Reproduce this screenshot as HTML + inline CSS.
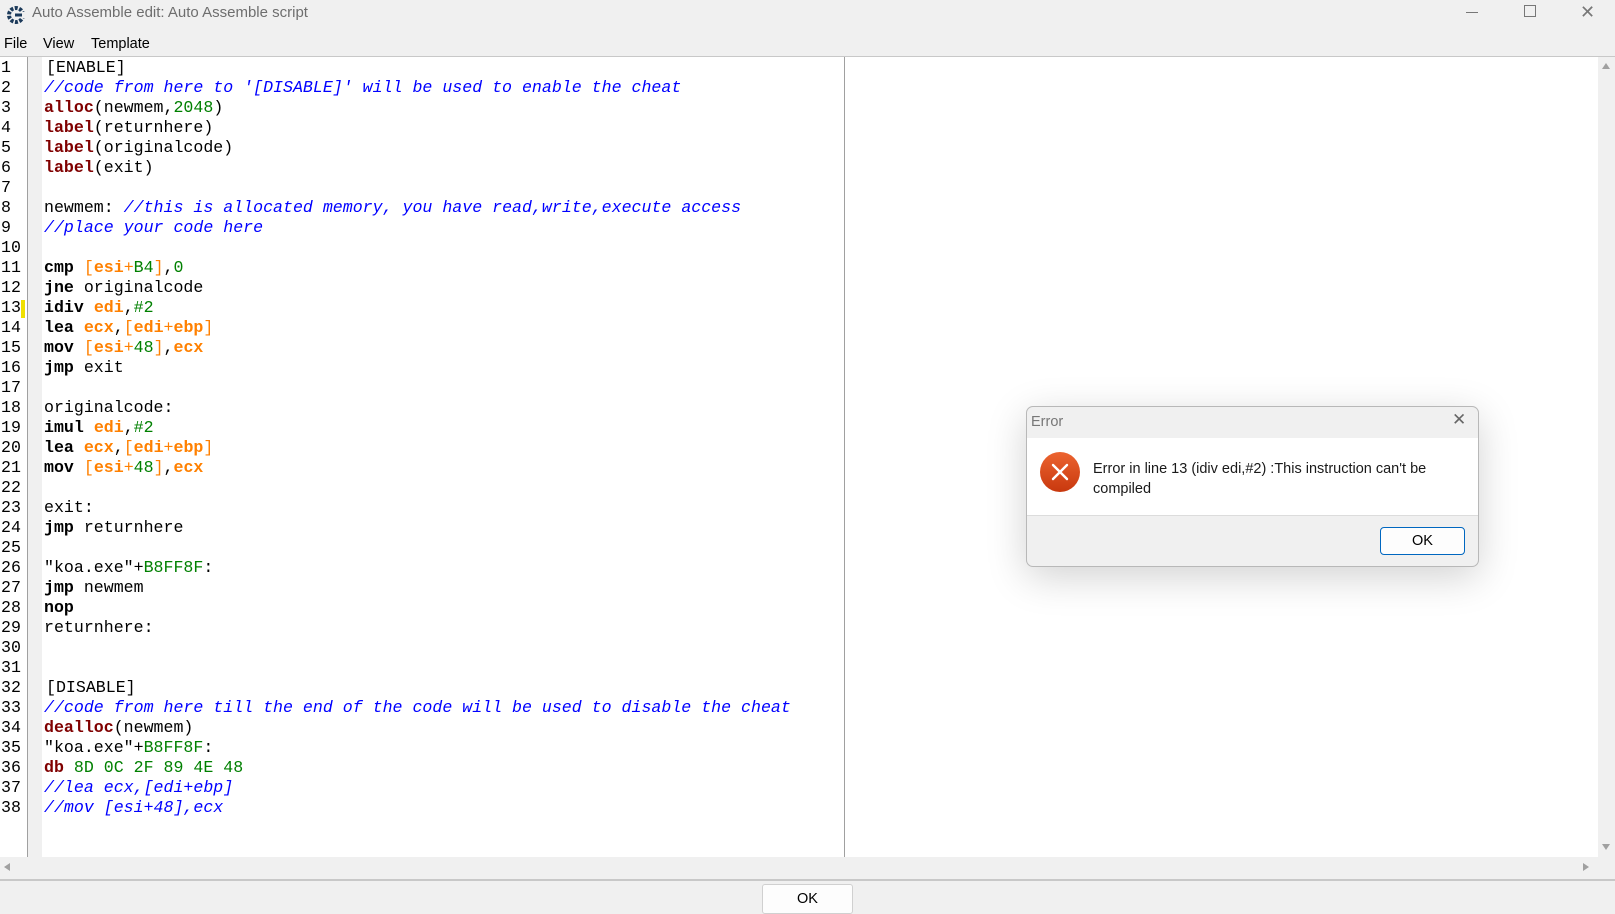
<!DOCTYPE html>
<html><head><meta charset="utf-8"><style>
*{margin:0;padding:0;box-sizing:border-box}
body{width:1615px;height:910px;background:#f0f0f0;position:relative;overflow:hidden;font-family:"Liberation Sans",sans-serif}
.title{position:absolute;left:0;top:0;width:1615px;height:31px;background:#f0f0f0}
.title .t{position:absolute;left:32px;top:4px;font-size:15px;color:#6e6e6e}
.menu{position:absolute;top:36px;font-size:14.5px;color:#000}
.sep{position:absolute;left:0;top:56px;width:1615px;height:1px;background:#c8c8c8}
.ed{position:absolute;left:0;top:57px;width:1598px;height:800px;background:#fff}
.gut{position:absolute;left:27px;top:57px;width:15px;height:800px;background:#f0f0f0;border-left:1px solid #a0a0a0}
.nums,.code{position:absolute;top:58px;font-family:"Liberation Mono",monospace;font-size:16.6px;line-height:20px;white-space:pre;color:#000}
.nums{left:1px}
.code{left:44px}
.k{color:#800000;font-weight:bold}
.b{font-weight:bold}
.c{color:#0000ff;font-style:italic}
.n{color:#008000}
.r{color:#ff8000;font-weight:bold}
.o{color:#ff8000}
.sp{margin-left:2px}
.div{position:absolute;left:844px;top:57px;width:1px;height:800px;background:#a0a0a0}
.vs{position:absolute;left:1598px;top:57px;width:17px;height:802px;background:#f0f0f0}
.hs{position:absolute;left:0;top:858px;width:1615px;height:20px;background:#f0f0f0}
.bl{position:absolute;left:0;top:879px;width:1615px;height:2px;background:#c8c8c8}
.okb{position:absolute;left:762px;top:884px;width:91px;height:30px;background:#fdfdfd;border:1px solid #d0d0d0;border-radius:3px;font-size:14.5px;text-align:center;line-height:28px}
.dlg{position:absolute;left:1026px;top:406px;width:453px;height:161px;background:#f0f0f0;border:1px solid #b8b8b8;border-radius:7px;box-shadow:0 10px 40px rgba(0,0,0,.18);overflow:hidden}
.dlg .body{position:absolute;left:0;top:31px;width:100%;height:78px;background:#fff;border-bottom:1px solid #dcdcdc}
.dlg .msg{position:absolute;left:66px;top:21px;font-size:14.5px;line-height:20px;color:#1a1a1a}
.dlg .ok{position:absolute;left:353px;top:120px;width:85px;height:28px;background:#fdfdfd;border:1px solid #0067c0;border-radius:4px;font-size:14.5px;text-align:center;line-height:26px}
</style></head><body>
<div class="title">
<svg style="position:absolute;left:6px;top:4px" width="20" height="22" viewBox="0 0 20 22"><circle cx="10" cy="11" r="7" fill="none" stroke="#1c3a5a" stroke-width="4" stroke-dasharray="3 1.5"/><rect x="12" y="8" width="8" height="6" fill="#f0f0f0"/><rect x="9" y="9.5" width="7" height="3" fill="#1c3a5a"/></svg>
<div class="t">Auto Assemble edit: Auto Assemble script</div>
<div style="position:absolute;left:1466px;top:12px;width:12px;height:1px;background:#777"></div>
<div style="position:absolute;left:1524px;top:5px;width:12px;height:12px;border:1px solid #777"></div>
<div style="position:absolute;left:1580px;top:2px;font-size:18px;color:#777">✕</div>
</div>
<div class="menu" style="left:4px">File</div>
<div class="menu" style="left:43px">View</div>
<div class="menu" style="left:91px">Template</div>
<div class="sep"></div>
<div class="ed"></div>
<div class="gut"></div>
<div style="position:absolute;left:21px;top:300px;width:4px;height:18px;background:#f0e000"></div>
<div class="nums">1
2
3
4
5
6
7
8
9
10
11
12
13
14
15
16
17
18
19
20
21
22
23
24
25
26
27
28
29
30
31
32
33
34
35
36
37
38</div>
<div class="code"><span class="sp">[ENABLE]</span>
<span class="c">//code from here to '[DISABLE]' will be used to enable the cheat</span>
<span class="k">alloc</span>(newmem,<span class="n">2048</span>)
<span class="k">label</span>(returnhere)
<span class="k">label</span>(originalcode)
<span class="k">label</span>(exit)

newmem: <span class="c">//this is allocated memory, you have read,write,execute access</span>
<span class="c">//place your code here</span>

<span class="b">cmp</span> <span class="o">[</span><span class="r">esi</span><span class="o">+</span><span class="n">B4</span><span class="o">]</span>,<span class="n">0</span>
<span class="b">jne</span> originalcode
<span class="b">idiv</span> <span class="r">edi</span>,<span class="n">#2</span>
<span class="b">lea</span> <span class="r">ecx</span>,<span class="o">[</span><span class="r">edi</span><span class="o">+</span><span class="r">ebp</span><span class="o">]</span>
<span class="b">mov</span> <span class="o">[</span><span class="r">esi</span><span class="o">+</span><span class="n">48</span><span class="o">]</span>,<span class="r">ecx</span>
<span class="b">jmp</span> exit

originalcode:
<span class="b">imul</span> <span class="r">edi</span>,<span class="n">#2</span>
<span class="b">lea</span> <span class="r">ecx</span>,<span class="o">[</span><span class="r">edi</span><span class="o">+</span><span class="r">ebp</span><span class="o">]</span>
<span class="b">mov</span> <span class="o">[</span><span class="r">esi</span><span class="o">+</span><span class="n">48</span><span class="o">]</span>,<span class="r">ecx</span>

exit:
<span class="b">jmp</span> returnhere

"koa.exe"+<span class="n">B8FF8F</span>:
<span class="b">jmp</span> newmem
<span class="b">nop</span>
returnhere:


<span class="sp">[DISABLE]</span>
<span class="c">//code from here till the end of the code will be used to disable the cheat</span>
<span class="k">dealloc</span>(newmem)
"koa.exe"+<span class="n">B8FF8F</span>:
<span class="k">db</span> <span class="n">8D 0C 2F 89 4E 48</span>
<span class="c">//lea ecx,[edi+ebp]</span>
<span class="c">//mov [esi+48],ecx</span></div>
<div class="div"></div>
<div class="vs"><div style="position:absolute;left:4px;top:6px;border:4px solid transparent;border-bottom:6px solid #a0a0a0;border-top:0"></div><div style="position:absolute;left:4px;top:787px;border:4px solid transparent;border-top:6px solid #a0a0a0;border-bottom:0"></div></div>
<div class="hs"><div style="position:absolute;left:4px;top:5px;border:4px solid transparent;border-right:6px solid #a0a0a0;border-left:0"></div><div style="position:absolute;left:1583px;top:5px;border:4px solid transparent;border-left:6px solid #a0a0a0;border-right:0"></div></div>
<div class="bl"></div>
<div class="okb">OK</div>
<div class="dlg">
<div style="position:absolute;left:4px;top:7px;font-size:14.5px;color:#777">Error</div>
<div style="position:absolute;left:425px;top:3px;font-size:17px;color:#666">✕</div>
<div class="body">
<svg style="position:absolute;left:12px;top:13px" width="42" height="42" viewBox="0 0 42 42"><defs><linearGradient id="g" x1="0" y1="0" x2="0" y2="1"><stop offset="0" stop-color="#ec6430"/><stop offset="1" stop-color="#c8380e"/></linearGradient></defs><circle cx="21" cy="21" r="20" fill="url(#g)"/><path d="M14 14L28 28M28 14L14 28" stroke="#fff" stroke-width="2.4" stroke-linecap="round"/></svg>
<div class="msg">Error in line 13 (idiv edi,#2) :This instruction can't be<br>compiled</div>
</div>
<div class="ok">OK</div>
</div>
</body></html>
